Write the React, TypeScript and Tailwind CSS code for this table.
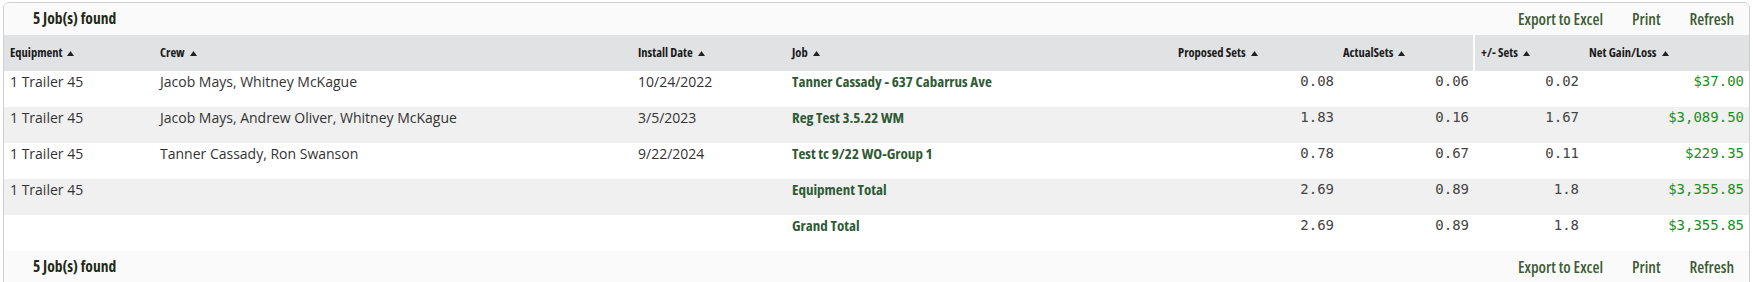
import React from 'react';

type Row = {
  equipment: string;
  crew: string;
  date: string;
  job: string;
  proposed: string;
  actual: string;
  diff: string;
  net: string;
};

const rows: Row[] = [
  { equipment: '1 Trailer 45', crew: 'Jacob Mays, Whitney McKague', date: '10/24/2022', job: 'Tanner Cassady - 637 Cabarrus Ave', proposed: '0.08', actual: '0.06', diff: '0.02', net: '$37.00' },
  { equipment: '1 Trailer 45', crew: 'Jacob Mays, Andrew Oliver, Whitney McKague', date: '3/5/2023', job: 'Reg Test 3.5.22 WM', proposed: '1.83', actual: '0.16', diff: '1.67', net: '$3,089.50' },
  { equipment: '1 Trailer 45', crew: 'Tanner Cassady, Ron Swanson', date: '9/22/2024', job: 'Test tc 9/22 WO-Group 1', proposed: '0.78', actual: '0.67', diff: '0.11', net: '$229.35' },
  { equipment: '1 Trailer 45', crew: '', date: '', job: 'Equipment Total', proposed: '2.69', actual: '0.89', diff: '1.8', net: '$3,355.85' },
  { equipment: '', crew: '', date: '', job: 'Grand Total', proposed: '2.69', actual: '0.89', diff: '1.8', net: '$3,355.85' },
];

const cols = 'grid grid-cols-[150px_478px_154px_386px_165px_136px_110px_166px]';
const sans = "font-['Open_Sans',Roboto,sans-serif] font-stretch-75%";
const mono = "font-['DejaVu_Sans_Mono',monospace] font-stretch-100%";
const body = 'pl-[6px] text-[14px] leading-5 text-[#333] font-stretch-90%';

const SortArrow = () => (
  <svg width="7" height="5" viewBox="0 0 7 5" className="ml-[5px] inline-block">
    <path d="M0 5 L3.5 0 L7 5 Z" fill="#222" />
  </svg>
);

const HeadCell: React.FC<{ label: string; divider?: boolean }> = ({ label, divider }) => (
  <div className={`flex items-center pl-[6px] ${divider ? 'border-l-2 border-white pl-[4px]' : ''}`}>
    <span className="text-[12.5px] font-bold text-[#1a1a1a]">{label}</span>
    <SortArrow />
  </div>
);

const Toolbar = () => (
  <div className="flex h-[32px] items-center justify-between bg-[#fafafa] pl-[29px] pr-[15px]">
    <span className="text-[15.5px] font-bold text-[#1f2a17]">5 Job(s) found</span>
    <div className="flex items-center gap-[29px] text-[16px] font-semibold text-[#3d5c36]">
      <span>Export to Excel</span>
      <span>Print</span>
      <span>Refresh</span>
    </div>
  </div>
);

export default function App() {
  return (
    <div className={`bg-white pl-[3px] pt-[2px] ${sans}`}>
      <div className="w-[1747px] overflow-hidden rounded-t-[6px] border border-[#cfcfcf]">
        <Toolbar />
        <div className={`${cols} h-[36px] bg-[#e1e2e4]`}>
          <HeadCell label="Equipment" />
          <HeadCell label="Crew" />
          <HeadCell label="Install Date" />
          <HeadCell label="Job" />
          <HeadCell label="Proposed Sets" />
          <HeadCell label="ActualSets" />
          <HeadCell label="+/- Sets" divider />
          <HeadCell label="Net Gain/Loss" />
        </div>
        {rows.map((r, i) => (
          <div key={i} className={`${cols} h-[36px] ${i % 2 === 1 ? 'bg-[#f0f0f0]' : 'bg-white'}`}>
            <div className={`${body} pt-[1px]`}>{r.equipment}</div>
            <div className={`${body} pt-[1px]`}>{r.crew}</div>
            <div className={`${body} pt-[1px]`}>{r.date}</div>
            <div className="pl-[6px] text-[15px] font-bold leading-5 text-[#2f5a34] font-stretch-[70%]">{r.job}</div>
            <div className={`pr-[3px] text-right text-[14px] leading-5 text-[#444] ${mono}`}>{r.proposed}</div>
            <div className={`pr-[4px] text-right text-[14px] leading-5 text-[#444] ${mono}`}>{r.actual}</div>
            <div className={`pr-[4px] text-right text-[14px] leading-5 text-[#444] ${mono}`}>{r.diff}</div>
            <div className={`pr-[5px] text-right text-[14px] leading-5 text-[#1e8c1e] ${mono}`}>{r.net}</div>
          </div>
        ))}
        <Toolbar />
      </div>
    </div>
  );
}
